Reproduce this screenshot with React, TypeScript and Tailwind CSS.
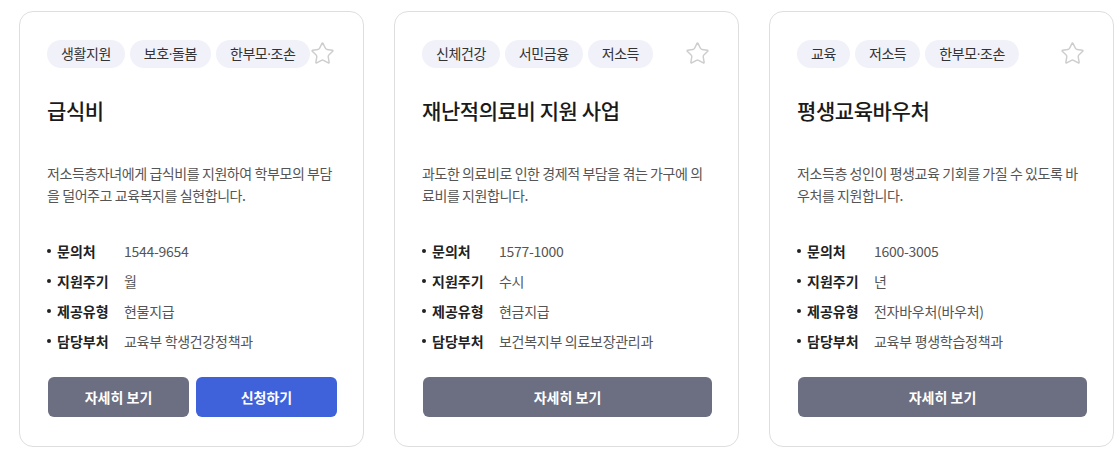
import React from 'react';
import { Star } from 'lucide-react';

type Benefit = {
  tags: string[];
  title: string;
  desc: string;
  phone: string;
  cycle: string;
  kind: string;
  dept: string;
  canApply?: boolean;
};

const benefits: Benefit[] = [
  {
    tags: ['생활지원', '보호·돌봄', '한부모·조손'],
    title: '급식비',
    desc: '저소득층자녀에게 급식비를 지원하여 학부모의 부담을 덜어주고 교육복지를 실현합니다.',
    phone: '1544-9654',
    cycle: '월',
    kind: '현물지급',
    dept: '교육부 학생건강정책과',
    canApply: true,
  },
  {
    tags: ['신체건강', '서민금융', '저소득'],
    title: '재난적의료비 지원 사업',
    desc: '과도한 의료비로 인한 경제적 부담을 겪는 가구에 의료비를 지원합니다.',
    phone: '1577-1000',
    cycle: '수시',
    kind: '현금지급',
    dept: '보건복지부 의료보장관리과',
  },
  {
    tags: ['교육', '저소득', '한부모·조손'],
    title: '평생교육바우처',
    desc: '저소득층 성인이 평생교육 기회를 가질 수 있도록 바우처를 지원합니다.',
    phone: '1600-3005',
    cycle: '년',
    kind: '전자바우처(바우처)',
    dept: '교육부 평생학습정책과',
  },
];

// the CJK font draws "·" full width, so set it in a latin face
const TagText: React.FC<{ text: string }> = ({ text }) => {
  const parts = text.split('·');
  return (
    <>
      {parts.map((p, i) => (
        <React.Fragment key={i}>
          {i > 0 && <span className="font-['Liberation_Sans'] mx-[-0.5px]">·</span>}
          {p}
        </React.Fragment>
      ))}
    </>
  );
};

const InfoRow: React.FC<{ label: string; value: string }> = ({ label, value }) => (
  <li className="flex items-center h-[30px] text-[14px]">
    <span className="flex items-center w-[77px] shrink-0 font-bold text-[#222]">
      <span className="w-[4px] h-[4px] rounded-full bg-[#222] mr-[6px]" />
      {label}
    </span>
    <span className="text-[#555] tracking-[-0.02em]">{value}</span>
  </li>
);

const BenefitCard: React.FC<{ item: Benefit }> = ({ item }) => (
  <div className="w-[345px] h-[436px] shrink-0 rounded-[14px] border border-[#dedede] bg-white pl-[27px] pr-[26px] pt-[27px] flex flex-col">
    <div className="flex items-center justify-between h-[29px] pr-[2px]">
      <div className="flex gap-[5px]">
        {item.tags.map((t) => (
          <span
            key={t}
            className="h-[28px] px-[14px] rounded-full bg-[#f1f1fa] text-[14px] text-[#333] flex items-center whitespace-nowrap tracking-[-0.03em]"
          >
            <TagText text={t} />
          </span>
        ))}
      </div>
      <Star size={25} strokeWidth={1.4} className="text-[#cdcdcd] shrink-0" />
    </div>

    <h2 className="mt-[26px] text-[21px] leading-[32px] font-medium text-[#1a1a1a] tracking-[-0.02em]">
      {item.title}
    </h2>

    <p className="mt-[36px] text-[14px] leading-[22px] text-[#555] tracking-[-0.03em]">{item.desc}</p>

    <ul className="mt-[30px]">
      <InfoRow label="문의처" value={item.phone} />
      <InfoRow label="지원주기" value={item.cycle} />
      <InfoRow label="제공유형" value={item.kind} />
      <InfoRow label="담당부처" value={item.dept} />
    </ul>

    <div className="mt-[21px] pl-[1px] flex gap-[7px]">
      <button className="flex-1 h-[40px] rounded-[6px] bg-[#6c6e82] text-white text-[14px] font-bold">
        자세히 보기
      </button>
      {item.canApply && (
        <button className="flex-1 h-[40px] rounded-[6px] bg-[#3f61d9] text-white text-[14px] font-bold">
          신청하기
        </button>
      )}
    </div>
  </div>
);

export default function App() {
  return (
    <div
      className="w-[1117px] h-[454px] bg-white pl-[19px] pt-[11px] flex gap-[30px] overflow-hidden"
      style={{ fontFamily: '"Noto Sans CJK KR", "Noto Sans", sans-serif' }}
    >
      {benefits.map((b) => (
        <BenefitCard key={b.title} item={b} />
      ))}
    </div>
  );
}
